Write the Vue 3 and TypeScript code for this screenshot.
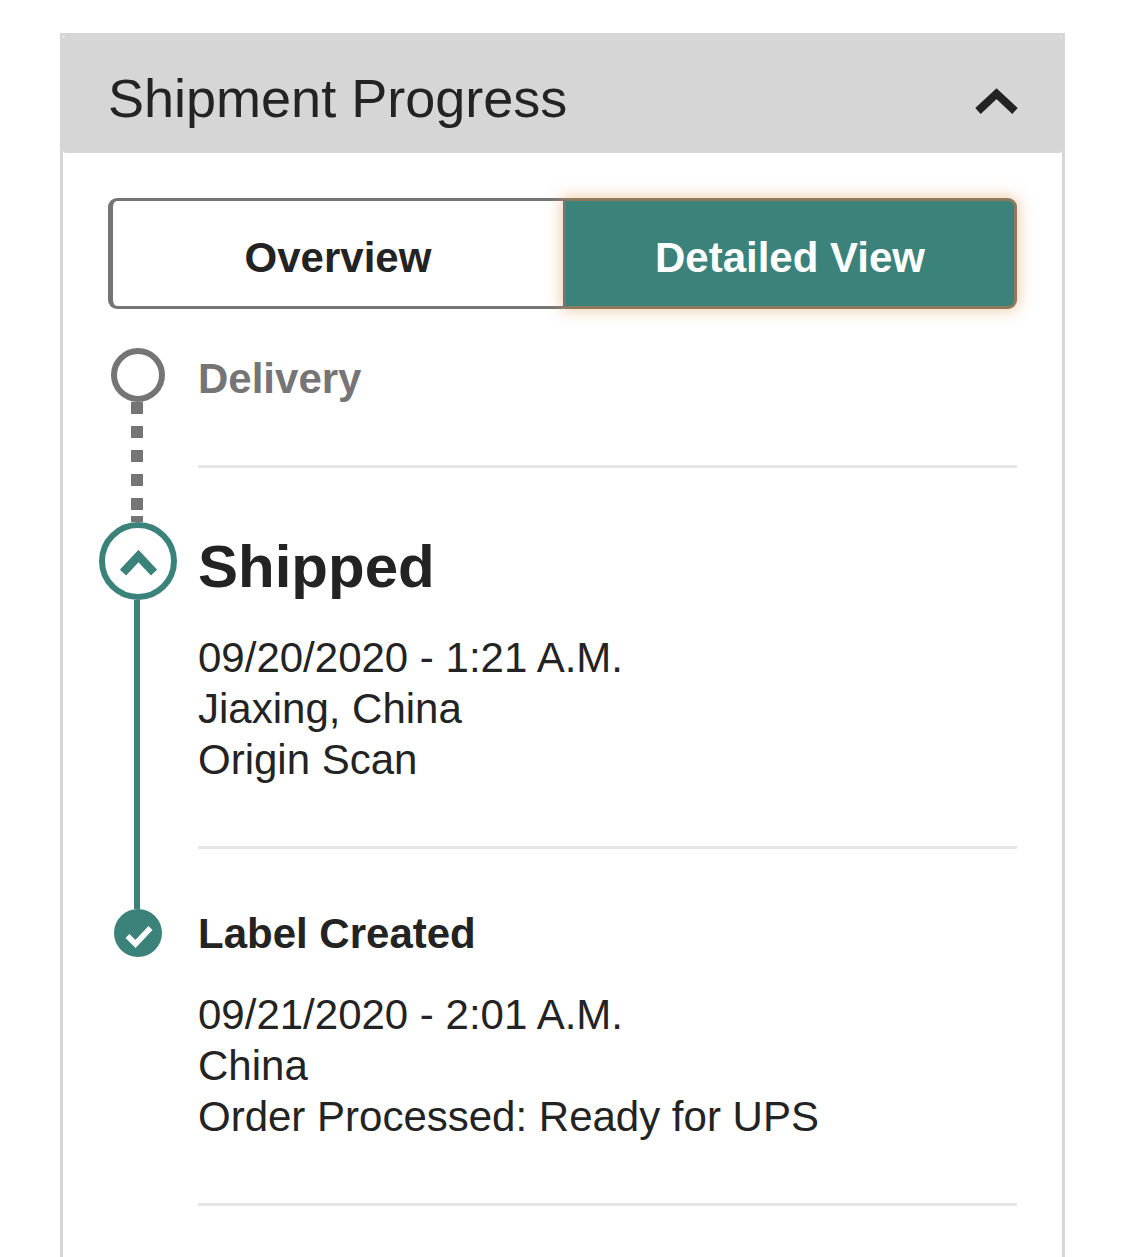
<script setup lang="ts">
interface Step {
  key: string
  title: string
  lines: string[]
}

const steps: Step[] = [
  { key: 'delivery', title: 'Delivery', lines: [] },
  { key: 'shipped', title: 'Shipped', lines: ['09/20/2020 - 1:21 A.M.', 'Jiaxing, China', 'Origin Scan'] },
  { key: 'label', title: 'Label Created', lines: ['09/21/2020 - 2:01 A.M.', 'China', 'Order Processed: Ready for UPS'] },
]
</script>

<template>
  <main class="page">
    <section class="panel">
      <header class="head">
        <h1 class="head-title">Shipment Progress</h1>
        <svg class="head-chevron" viewBox="0 0 44 30" aria-hidden="true">
          <path d="M3 25 L21.5 7.7 L40 25" fill="none" stroke="#232323" stroke-width="8" />
        </svg>
      </header>
      <div class="body">
        <div class="toggle">
          <button class="tab">Overview</button>
          <button class="tab tab-active">Detailed View</button>
        </div>
        <ol class="steps">
          <li v-for="step in steps" :key="step.key" class="step" :class="`step-${step.key}`">
            <div class="marker">
              <span v-if="step.key === 'delivery'" class="dot-open"></span>
              <span v-else-if="step.key === 'shipped'" class="dot-current">
                <svg viewBox="0 0 37 26" class="dot-chevron" aria-hidden="true">
                  <path d="M3 22.5 L18.5 6 L34 22.5" fill="none" stroke="#3b827b" stroke-width="8.5" />
                </svg>
              </span>
              <span v-else class="dot-done">
                <svg viewBox="0 0 28 24" class="dot-check" aria-hidden="true">
                  <path d="M2.5 12 L10.5 20 L25.5 4" fill="none" stroke="#fff" stroke-width="5.5" />
                </svg>
              </span>
              <span v-if="step.key === 'delivery'" class="link-dashed"></span>
              <span v-if="step.key === 'shipped'" class="link-solid"></span>
            </div>
            <div class="content">
              <h2 class="step-title">{{ step.title }}</h2>
              <p v-if="step.lines.length" class="step-lines">
                <span v-for="line in step.lines" :key="line" class="step-line">{{ line }}</span>
              </p>
            </div>
          </li>
        </ol>
      </div>
    </section>
  </main>
</template>

<style>
html, body { margin: 0; background: #fff; overflow: hidden; }
</style>

<style scoped>
.page {
  padding: 33px 60px 0;
  font-family: "Liberation Sans", Arial, sans-serif;
  color: #232323;
}
.panel {
  width: 1005px;
  box-sizing: border-box;
  border: solid #d6d6d6;
  border-width: 3px 3px 0;
}
.head {
  height: 117px;
  box-sizing: border-box;
  background: #d6d6d6;
  border-radius: 3px;
  display: flex;
  align-items: center;
  justify-content: space-between;
  padding: 7px 43px 0 45px;
}
.head-title {
  margin: 0;
  font-size: 54px;
  font-weight: 400;
  line-height: 62px;
}
.head-chevron { width: 44px; height: 30px; margin-top: 6px; }
.body { padding: 45px 45px 51px; }
.toggle { display: grid; grid-template-columns: 455px 454px; height: 111px; }
.tab {
  font: 700 42px/1 "Liberation Sans", Arial, sans-serif;
  color: #232323;
  background: #fff;
  border: 3px solid #757575;
  border-left-width: 5px;
  border-right: 0;
  border-radius: 9px 0 0 9px;
  padding: 8px 0 0;
}
.tab-active {
  color: #fff;
  background: #3b827b;
  border: 3px solid #8f7a5c;
  border-left-color: #757575;
  border-radius: 0 9px 9px 0;
  box-shadow: 0 0 16px 1px rgba(222, 155, 90, 0.55);
  position: relative;
}
.steps { list-style: none; margin: 0; padding: 39px 0 0; }
.step { display: grid; grid-template-columns: 59px 1fr; column-gap: 31px; }
.step-shipped { padding-top: 54px; }
.step-label { padding-top: 59px; }
.marker { position: relative; display: flex; justify-content: center; align-items: flex-start; }
.dot-open {
  width: 54px; height: 54px; box-sizing: border-box;
  border: 6px solid #757575; border-radius: 50%;
}
.dot-current {
  width: 78px; height: 78px; flex: none; box-sizing: border-box;
  border: 6px solid #3b827b; border-radius: 50%;
  display: flex; align-items: center; justify-content: center;
  background: #fff; position: relative; z-index: 1;
}
.dot-chevron { width: 37px; height: 26px; margin: 4px 0 0 1px; }
.dot-done {
  width: 48px; height: 48px; border-radius: 50%; background: #3b827b;
  margin-top: 1px;
  display: flex; align-items: center; justify-content: center;
}
.dot-check { width: 28px; height: 24px; margin: 6px 0 0 3px; }
.link-dashed {
  position: absolute; left: 23px; top: 54px; width: 12px; height: 120px;
  background:
    linear-gradient(#757575, #757575) left bottom / 12px 6px no-repeat,
    repeating-linear-gradient(#757575 0 12px, transparent 12px 24px) left top / 12px 108px no-repeat;
}
.link-solid {
  position: absolute; left: 26px; top: 78px; width: 6px; height: 309px;
  background: #3b827b;
}
.content { border-bottom: 3px solid #e6e6e6; }
.step-title { margin: 0; font-size: 42px; font-weight: 700; line-height: 51px; }
.step-delivery .content { padding-top: 5px; padding-bottom: 61px; }
.step-delivery .step-title { color: #757575; }
.step-shipped .step-title { font-size: 60px; line-height: 70px; margin-top: 10px; }
.step-lines { margin: 30px 0 0; padding-bottom: 61px; font-size: 42px; line-height: 51px; }
.step-line { display: block; }
</style>
